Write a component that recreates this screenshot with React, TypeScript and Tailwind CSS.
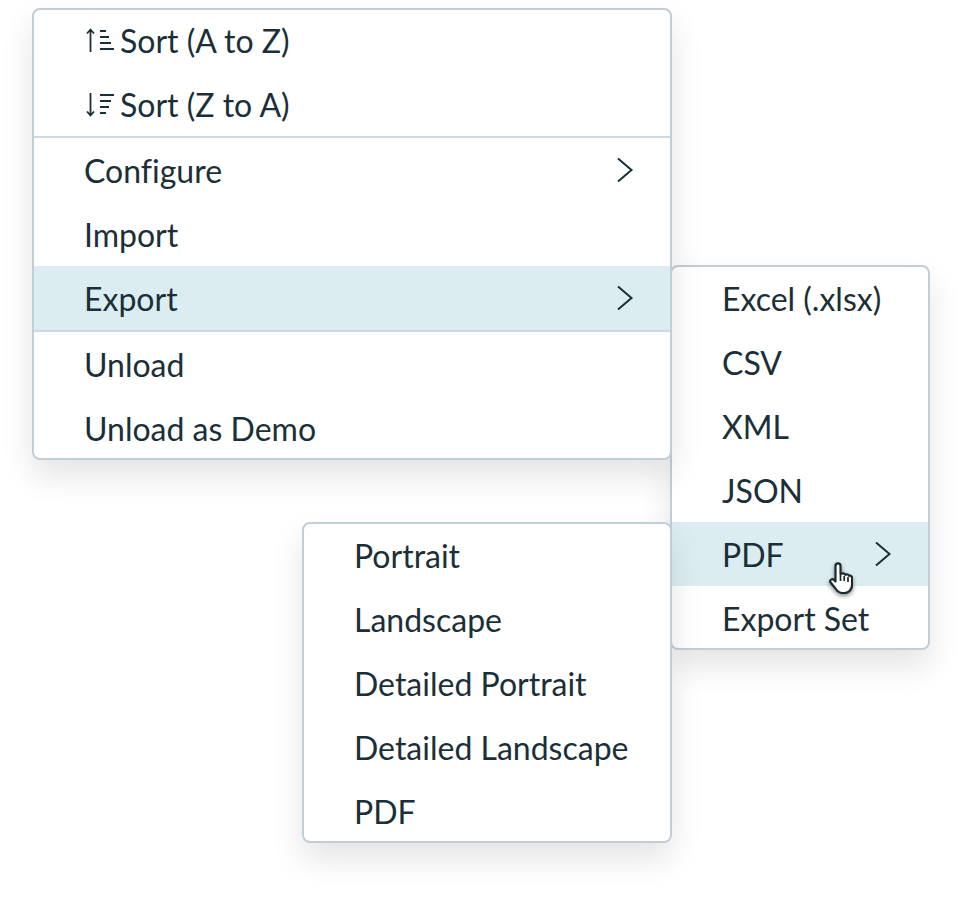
const Chevron = () => (
  <svg width="18" height="26" viewBox="0 0 18 26" fill="none" stroke="#1b2f38" strokeWidth="2">
    <path d="M2 1.5 L15.5 13 L2 24.5" />
  </svg>
);

const SortUp = () => (
  <svg width="30" height="26" viewBox="0 0 30 26" fill="none" stroke="#1b2f38" strokeWidth="1.8">
    <path d="M6.500 25V2M3 6.500L6.500 2.500l3.500 4" />
    <path d="M16 4h6M16 10h9M16 16h11M16 22h14" />
  </svg>
);

const SortDown = () => (
  <svg width="30" height="26" viewBox="0 0 30 26" fill="none" stroke="#1b2f38" strokeWidth="1.8">
    <path d="M6.500 2v23M3 20.500l3.500 4 3.500-4" />
    <path d="M16 4h14M16 10h11M16 16h9M16 22h6" />
  </svg>
);

const Hand = () => (
  <svg width="24" height="32" viewBox="0 0 24 32" className="drop-shadow-[0_2px_2px_rgba(0,0,0,0.45)]">
    <path
      d="M6.500 4c0-3.500 5-3.500 5 0v8c2-1.200 4-.8 4.800.8 1.500-.8 3.200-.4 3.800 1 1.500-.5 3 .5 3 2.500v6c0 5-3 8.700-7.500 8.700h-2c-3.500 0-5.500-2-7.500-5l-4.500-5.500c-1.500-2 1.500-4.500 3.500-2.500l1.400 1.400z"
      fill="#fff"
      stroke="#1c2a30"
      strokeWidth="2.200"
      strokeLinejoin="round"
    />
    <path d="M11.500 13v6M15.200 14v5M19 15v5" stroke="#1c2a30" strokeWidth="1.700" fill="none" />
  </svg>
);

function Row({
  label,
  icon,
  arrow,
  active,
}: {
  label: string;
  icon?: React.ReactNode;
  arrow?: boolean;
  active?: boolean;
}) {
  return (
    <div className={`relative flex h-16 items-center pl-[50px] ${active ? "bg-[#dcedf2]" : ""}`}>
      {icon && <span className="mr-[6px] flex">{icon}</span>}
      <span className="relative top-[1px]">{label}</span>
      {arrow && (
        <span className="absolute right-[36px] flex">
          <Chevron />
        </span>
      )}
    </div>
  );
}

const menu =
  "absolute overflow-hidden rounded-[8px] border-2 border-[#c2ced6] bg-white shadow-[0_16px_32px_rgba(0,0,0,0.11)]";

export default function App() {
  return (
    <div className="relative h-[899px] w-[962px] overflow-hidden bg-white font-['Lato',sans-serif] text-[32px] leading-none text-[#1b2f38] [font-variant-ligatures:none]">
      <div className={`${menu} left-[670px] top-[265px] w-[260px]`}>
        <div className="-mt-[1px] -mb-[2px]">
          <Row label="Excel (.xlsx)" />
          <Row label="CSV" />
          <Row label="XML" />
          <Row label="JSON" />
          <Row label="PDF" arrow active />
          <Row label="Export Set" />
        </div>
      </div>

      <div className={`${menu} left-[32px] top-[8px] w-[640px]`}>
        <div className="-mt-[2px] -mb-[2px]">
          <Row label="Sort (A to Z)" icon={<SortUp />} />
          <Row label="Sort (Z to A)" icon={<SortDown />} />
          <div className="h-[2px] bg-[#cdd8df]" />
          <Row label="Configure" arrow />
          <Row label="Import" />
          <Row label="Export" arrow active />
          <div className="h-[2px] bg-[#cdd8df]" />
          <Row label="Unload" />
          <Row label="Unload as Demo" />
        </div>
      </div>

      <div className={`${menu} left-[302px] top-[522px] w-[370px]`}>
        <div className="-mt-[1px] -mb-[2px]">
          {["Portrait", "Landscape", "Detailed Portrait", "Detailed Landscape", "PDF"].map((t) => (
            <Row key={t} label={t} />
          ))}
        </div>
      </div>

      <div className="absolute left-[829px] top-[562px] flex">
        <Hand />
      </div>
    </div>
  );
}
